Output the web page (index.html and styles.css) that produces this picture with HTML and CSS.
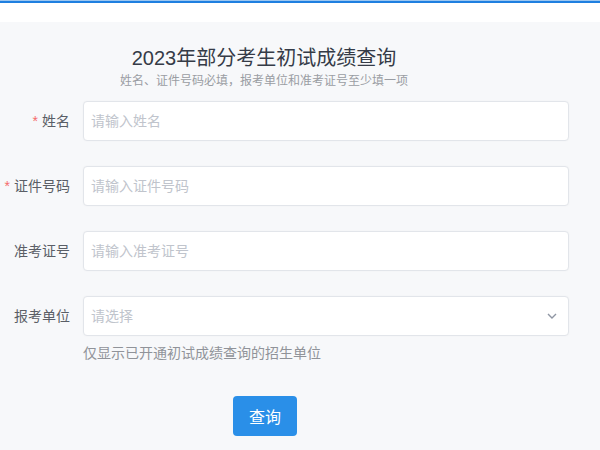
FILE: index.html
```html
<!DOCTYPE html>
<html lang="zh-CN">
<head>
<meta charset="utf-8">
<title>2023年部分考生初试成绩查询</title>
<link rel="stylesheet" href="styles.css">
</head>
<body>
<div class="topline"></div>
<div class="header"></div>
<main class="main">
  <div class="head">
    <h1 class="title">2023年部分考生初试成绩查询</h1>
    <p class="subtitle">姓名、证件号码必填，报考单位和准考证号至少填一项</p>
  </div>
  <form class="form">
    <div class="row">
      <label class="label"><span class="req">*</span>姓名</label>
      <div class="field"><input class="input" type="text" placeholder="请输入姓名"></div>
    </div>
    <div class="row">
      <label class="label"><span class="req">*</span>证件号码</label>
      <div class="field"><input class="input" type="text" placeholder="请输入证件号码"></div>
    </div>
    <div class="row">
      <label class="label">准考证号</label>
      <div class="field"><input class="input" type="text" placeholder="请输入准考证号"></div>
    </div>
    <div class="row row-last">
      <label class="label">报考单位</label>
      <div class="field">
        <div class="select">
          <span class="select-ph">请选择</span>
          <svg class="chev" width="10" height="6" viewBox="0 0 10 6"><path d="M1 1 L5 5 L9 1" fill="none" stroke="#8f96a3" stroke-width="1.4"/></svg>
        </div>
      </div>
    </div>
    <p class="help">仅显示已开通初试成绩查询的招生单位</p>
    <div class="actions">
      <button class="btn" type="button">查询</button>
    </div>
  </form>
</main>
</body>
</html>
```
FILE: styles.css
```css
html, body {
  margin: 0;
  padding: 0;
  background: #ffffff;
}
body {
  font-family: "Liberation Sans", "Noto Sans CJK SC", sans-serif;
  color: #606266;
}
.topline {
  height: 1px;
  background: #9cc6f0;
}
.topline + .header {
  border-top: 2px solid #1f7fe0;
  height: 19px;
  background: #ffffff;
}
.main {
  background: #f7f8fa;
  min-height: 428px;
  padding-top: 22px;
  box-sizing: border-box;
}
.head {
  width: 528px;
  text-align: center;
}
.title {
  margin: 0;
  font-size: 20px;
  line-height: 28px;
  font-weight: normal;
  color: #353b47;
}
.subtitle {
  margin: 0;
  font-size: 12px;
  line-height: 18px;
  color: #9a9da3;
}
.form {
  margin: 11px 0 0 0;
  width: 569px;
}
.row {
  display: flex;
  align-items: center;
  margin-bottom: 25px;
}
.row-last {
  margin-bottom: 0;
}
.label {
  width: 83px;
  padding-right: 13px;
  box-sizing: border-box;
  text-align: right;
  font-size: 14px;
  line-height: 20px;
  color: #5a5e66;
  flex-shrink: 0;
}
.req {
  color: #f56c6c;
  margin-right: 4px;
}
.field {
  flex: 1;
}
.input, .select {
  display: block;
  width: 100%;
  height: 40px;
  box-sizing: border-box;
  border: 1px solid #e2e5ea;
  border-radius: 4px;
  background: #ffffff;
  padding: 0 7px;
  font-family: "Liberation Sans", "Noto Sans CJK SC", sans-serif;
  font-size: 14px;
  color: #606266;
  outline: none;
  box-shadow: 0 0 2px rgba(0, 0, 0, 0.04);
}
.input::placeholder {
  color: #c0c4cc;
}
.select {
  display: flex;
  align-items: center;
  justify-content: space-between;
  padding-right: 11px;
}
.select-ph {
  color: #c0c4cc;
  line-height: 20px;
}
.chev {
  display: block;
}
.help {
  margin: 7px 0 0 83px;
  font-size: 14px;
  line-height: 20px;
  color: #909399;
}
.actions {
  width: 530px;
  display: flex;
  justify-content: center;
  margin-top: 33px;
}
.btn {
  width: 64px;
  height: 40px;
  border: none;
  border-radius: 4px;
  background: #2a8fe8;
  color: #ffffff;
  font-family: "Liberation Sans", "Noto Sans CJK SC", sans-serif;
  font-size: 16px;
  padding: 0;
  cursor: pointer;
}
```
